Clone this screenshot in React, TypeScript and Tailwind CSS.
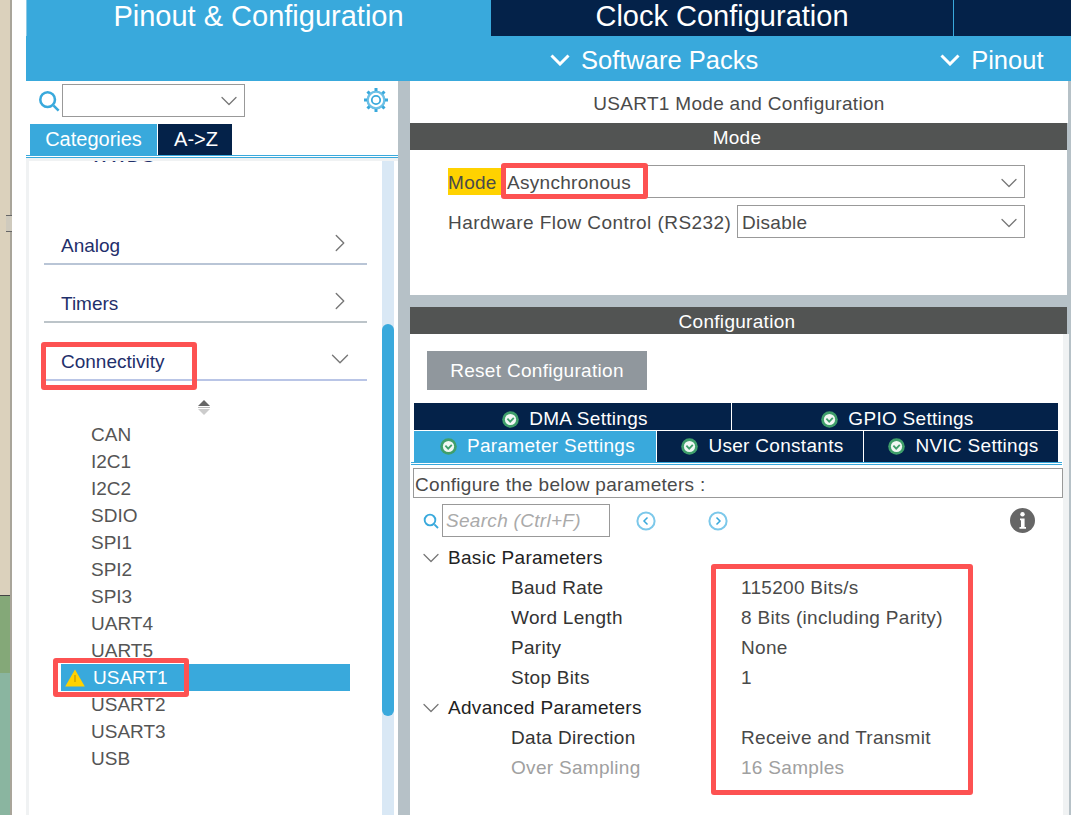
import React from 'react';
import { ChevronDown, ChevronRight } from 'lucide-react';

const font = { fontFamily: '"Liberation Sans", Arial, sans-serif' };

const SearchIcon = ({ size = 22 }: { size?: number }) => (
  <svg width={size} height={size} viewBox="0 0 24 24" fill="none" className="shrink-0">
    <circle cx="10.5" cy="10.5" r="8" stroke="#39a9dc" strokeWidth="2.8" />
    <path d="M17 17 L22.5 22.5" stroke="#39a9dc" strokeWidth="2.8" />
  </svg>
);

const GearIcon = () => (
  <svg width="26" height="26" viewBox="0 0 26 26" fill="none">
    <circle cx="13" cy="13" r="8.4" stroke="#6cc0e6" strokeWidth="2.4" />
    <circle cx="13" cy="13" r="4.2" stroke="#39a9dc" strokeWidth="1.8" />
    <path d="M13 1 V4 M13 22 V25 M1 13 H4 M22 13 H25 M4.5 4.5 L6.6 6.6 M19.4 19.4 L21.5 21.5 M21.5 4.5 L19.4 6.6 M6.6 19.4 L4.5 21.5" stroke="#39a9dc" strokeWidth="3" />
  </svg>
);

const CheckBadge = () => (
  <svg width="17" height="17" viewBox="0 0 17 17" className="shrink-0">
    <circle cx="8.5" cy="8.5" r="8.3" fill="#3f9f6b" />
    <circle cx="8.5" cy="8.5" r="5.6" fill="#f1f8f4" />
    <path d="M5.4 7.6 L8.2 10.6 L11.8 6.8" stroke="#3f9f6b" strokeWidth="1.8" fill="none" />
  </svg>
);

const NavCircle = ({ dir }: { dir: 'l' | 'r' }) => (
  <svg width="20" height="20" viewBox="0 0 20 20" fill="none">
    <circle cx="10" cy="10" r="8.6" stroke="#7cc8ea" strokeWidth="2" />
    <path d={dir === 'l' ? 'M11.5 6.5 L8 10 L11.5 13.5' : 'M8.5 6.5 L12 10 L8.5 13.5'} stroke="#39a9dc" strokeWidth="1.5" />
  </svg>
);

const Warning = () => (
  <svg width="20" height="18" viewBox="0 0 20 18" className="shrink-0">
    <path d="M10 0.5 L19.8 17.5 L0.2 17.5 Z" fill="#ffd200" />
    <path d="M10 6 V13" stroke="#b58f00" strokeWidth="1" />
  </svg>
);

const HeaderChevron = () => (
  <svg width="20" height="12" viewBox="0 0 20 12" fill="none" className="shrink-0">
    <path d="M1.5 1.5 L10 10 L18.5 1.5" stroke="#fff" strokeWidth="3" />
  </svg>
);

const Chevron = ({ className = '' }: { className?: string }) => (
  <ChevronDown size={28} strokeWidth={1.1} className={`-my-[6px] shrink-0 text-[#777] ${className}`} />
);

const Red = ({ className }: { className: string }) => (
  <div className={`pointer-events-none absolute rounded-[3px] border-[5px] border-[#fd5252] ${className}`} />
);

const Category = ({ label, open, line }: { label: string; open?: boolean; line: string }) => (
  <div className="flex h-[58px] items-end">
    <div className={`ml-[15px] flex h-[34px] w-[323px] items-center justify-between border-b-2 pl-[17px] pr-[17px] text-[19px] text-[#1f2f6b] ${line}`}>
      <span className="pb-[1px]">{label}</span>
      {open ? (
        <ChevronDown size={30} strokeWidth={1.1} className="-mr-[5px] mb-[8px] text-[#777]" />
      ) : (
        <ChevronRight size={30} strokeWidth={1.1} className="-mr-[5px] mb-[8px] text-[#777]" />
      )}
    </div>
  </div>
);

const Select = ({ value, className }: { value: string; className: string }) => (
  <div className={`flex h-[33px] items-center justify-between border border-[#999] pl-[4px] pr-[1px] text-[#4a4a4a] ${className}`}>
    <span>{value}</span>
    <Chevron />
  </div>
);

const DarkBar = ({ label }: { label: string }) => (
  <div className="flex h-[27px] w-[657px] items-center justify-center bg-[#525453] pr-[3px] pt-[4px] text-white">{label}</div>
);

const SettingTab = ({ label, className }: { label: string; className: string }) => (
  <div className={`flex items-center justify-center gap-[10px] pl-[5px] text-white ${className}`}>
    <CheckBadge />
    <span>{label}</span>
  </div>
);

const items = ['CAN', 'I2C1', 'I2C2', 'SDIO', 'SPI1', 'SPI2', 'SPI3', 'UART4', 'UART5', 'USART1', 'USART2', 'USART3', 'USB'];

const groups = [
  {
    title: 'Basic Parameters',
    rows: [
      ['Baud Rate', '115200 Bits/s'],
      ['Word Length', '8 Bits (including Parity)'],
      ['Parity', 'None'],
      ['Stop Bits', '1'],
    ],
  },
  {
    title: 'Advanced Parameters',
    rows: [
      ['Data Direction', 'Receive and Transmit'],
      ['Over Sampling', '16 Samples'],
    ],
  },
];

export default function App() {
  return (
    <div className="relative flex h-[815px] w-[1071px] overflow-hidden bg-white" style={font}>
      {/* desktop peeking out on the left */}
      <div className="flex w-[12px] shrink-0 flex-col border-r-2 border-[#a9a59a]">
        <div className="h-[595px] bg-[#dbd1bc]" />
        <div className="h-[78px] border-t border-[#444] bg-[#84a878]" />
        <div className="flex-1 bg-[#8ab5a0]" />
      </div>
      <div className="w-[14px] shrink-0 bg-white" />

      <div className="flex min-w-0 flex-1 flex-col">
        <header className="h-[81px] shrink-0 bg-[#39a9dc] text-white">
          <div className="flex h-[36px] text-[29px] leading-[32px]">
            <div className="flex w-[464px] justify-center border-l border-[#8cc9e6] bg-[#39a9dc]">Pinout &amp; Configuration</div>
            <div className="ml-px flex w-[462px] justify-center bg-[#042249]">Clock Configuration</div>
            <div className="ml-px flex-1 bg-[#042249]" />
          </div>
          <div className="flex h-[45px] items-center pt-[3px] text-[25.5px]">
            <div className="ml-[524px] flex items-center gap-[11px]">
              <HeaderChevron />
              <span>Software Packs</span>
            </div>
            <div className="ml-[182px] flex items-center gap-[11px]">
              <HeaderChevron />
              <span>Pinout</span>
            </div>
          </div>
        </header>

        <div className="flex min-h-0 flex-1">
          {/* left panel */}
          <aside className="flex w-[372px] shrink-0 flex-col">
            <div className="flex h-[43px] items-start pl-[12px] pr-[9px] pt-[3px]">
              <div className="mt-[6px]">
                <SearchIcon />
              </div>
              <div className="ml-[2px] flex h-[33px] w-[183px] items-center justify-end border border-[#999] pr-[1px]">
                <Chevron />
              </div>
              <div className="ml-auto mt-[3px]">
                <GearIcon />
              </div>
            </div>
            <div className="flex h-[31px] gap-px pl-[4px] text-[20px] text-white">
              <div className="flex w-[127px] items-center justify-center bg-[#39a9dc] pb-[1px]">Categories</div>
              <div className="flex w-[74px] items-center justify-center bg-[#042249] pb-[1px] pl-[2px]">A-&gt;Z</div>
            </div>
            <div className="h-[3px] border-y border-[#39a9dc] bg-white" />
            <div className="h-[3px] bg-[#f0f2f3]" />
            <div className="flex min-h-0 flex-1 bg-[#f0f2f3] pl-[3px]">
              <div className="min-w-0 flex-1 overflow-hidden bg-white">
                <div className="-mt-[15px] pl-[62px] text-[19px] leading-[20px] text-[#1f2f6b]">WWDG</div>
                <div className="h-[41px]" />
                <Category label="Analog" line="border-[#b9c5d6]" />
                <Category label="Timers" line="border-[#bcc4c9]" />
                <Category label="Connectivity" open line="border-[#b9c5e6]" />
                <div className="flex h-[27px] items-center pl-[168px] pt-[26px]">
                  <svg width="14" height="16" viewBox="0 0 14 16" className="shrink-0">
                    <path d="M7 0 L13 6 H1 Z" fill="#666" />
                    <rect x="1" y="7" width="12" height="1" fill="#bbb" />
                    <path d="M1 9 H13 L7 15 Z" fill="#ccc" />
                  </svg>
                </div>
                <ul className="mt-[13px] text-[19px] leading-[27px] text-[#555]">
                  {items.map((item) =>
                    item === 'USART1' ? (
                      <li key={item} className="ml-[32px] flex h-[27px] w-[289px] items-center gap-[8px] bg-[#39a9dc] pl-[4px] text-white">
                        <Warning />
                        <span>{item}</span>
                      </li>
                    ) : (
                      <li key={item} className="h-[27px] pl-[62px]">
                        {item}
                      </li>
                    ),
                  )}
                </ul>
              </div>
              <div className="w-[12px] shrink-0 bg-[#d9e8f5]">
                <div className="mt-[163px] h-[392px] rounded-[6px] bg-[#39a9dc]" />
              </div>
              <div className="w-[4px] shrink-0 bg-white" />
            </div>
          </aside>

          <div className="w-[12px] shrink-0 bg-[#b6c1c7]" />

          {/* right panel */}
          <main className="flex min-w-0 flex-1 flex-col bg-[#b6c1c7] text-[19px] tracking-[0.3px] text-[#4a4a4a]">
            <div className="flex h-[42px] w-[658px] items-center justify-center bg-white pt-[4px]">USART1 Mode and Configuration</div>
            <DarkBar label="Mode" />
            <div className="h-[145px] w-[657px] bg-white pl-[38px] pt-[15px]">
              <div className="flex items-center">
                <div className="flex h-[27px] w-[54px] items-center bg-[#ffd200] pt-[3px]">Mode</div>
                <Select value="Asynchronous" className="w-[523px] pt-[3px]" />
              </div>
              <div className="mt-[7px] flex items-center">
                <div className="w-[289px] whitespace-nowrap pt-[3px] tracking-[0.45px]">Hardware Flow Control (RS232)</div>
                <Select value="Disable" className="w-[288px] pt-[3px]" />
              </div>
            </div>
            <div className="h-[12px] w-[657px] shrink-0" />
            <DarkBar label="Configuration" />

            <div className="flex min-h-0 w-[659px] flex-1 bg-[#f0f2f3]">
              <div className="w-[653px] bg-white">
                <div className="pl-[17px] pt-[17px]">
                  <div className="flex h-[39px] w-[220px] items-center justify-center bg-[#90979d] pt-[1px] text-white">Reset Configuration</div>
                </div>

                <div className="ml-[4px] mt-[13px] flex h-[27px] w-[644px] gap-px">
                  <SettingTab label="DMA Settings" className="w-[317px] bg-[#042249] pt-[5px]" />
                  <SettingTab label="GPIO Settings" className="flex-1 bg-[#042249] pt-[5px]" />
                </div>
                <div className="ml-[4px] mt-px flex h-[31px] w-[644px] gap-px">
                  <SettingTab label="Parameter Settings" className="w-[242px] bg-[#39a9dc]" />
                  <SettingTab label="User Constants" className="w-[206px] bg-[#042249]" />
                  <SettingTab label="NVIC Settings" className="flex-1 bg-[#042249]" />
                </div>
                <div className="ml-[1px] h-[3px] w-[651px] border-y border-[#39a9dc] bg-white" />
                <div className="ml-[3px] mt-[3px] flex h-[30px] w-[650px] items-center border border-[#999] pl-[1px] pt-[4px]">Configure the below parameters :</div>

                <div className="ml-[13px] mt-[6px] flex h-[33px] w-[612px] items-center">
                  <SearchIcon size={16} />
                  <div className="ml-[3px] flex h-[33px] w-[168px] items-center border border-[#999] pl-[3px] pt-[2px] italic text-[#aaa]">Search (Ctrl+F)</div>
                  <div className="ml-[26px]">
                    <NavCircle dir="l" />
                  </div>
                  <div className="ml-[52px]">
                    <NavCircle dir="r" />
                  </div>
                  <svg width="25" height="25" viewBox="0 0 25 25" className="ml-auto shrink-0">
                    <circle cx="12.5" cy="12.5" r="12.5" fill="#666" />
                    <circle cx="12.5" cy="6.3" r="2.2" fill="#fff" />
                    <path d="M10 10.5 H14.6 V19 H16 V20.8 H9.5 V19 H11 V12.2 H10 Z" fill="#fff" />
                  </svg>
                </div>

                <div className="mt-[6px] leading-[30px]">
                  {groups.map((g) => (
                    <div key={g.title}>
                      <div className="flex h-[30px] items-center pl-[7px] text-[#222]">
                        <Chevron className="mr-[3px]" />
                        <span>{g.title}</span>
                      </div>
                      {g.rows.map(([k, v]) => {
                        const off = k === 'Over Sampling';
                        return (
                          <div key={k} className={`flex h-[30px] items-center ${off ? 'text-[#a0a0a0]' : 'text-[#4a4a4a]'}`}>
                            <span className={`ml-[101px] w-[230px] ${off ? '' : 'text-[#333]'}`}>{k}</span>
                            <span>{v}</span>
                          </div>
                        );
                      })}
                    </div>
                  ))}
                </div>
              </div>
            </div>
          </main>
        </div>
      </div>

      {/* red annotation boxes */}
      <Red className="left-[41px] top-[342px] h-[48px] w-[156px]" />
      <Red className="left-[53px] top-[658px] h-[39px] w-[136px]" />
      <Red className="left-[501px] top-[163px] h-[36px] w-[147px]" />
      <Red className="left-[711px] top-[564px] h-[231px] w-[262px]" />

      {/* little grip on the window behind */}
      <div className="absolute left-[6px] top-[215px] h-[17px] w-[6px] border-y border-[#666] bg-[#cfcabd]" />
    </div>
  );
}
